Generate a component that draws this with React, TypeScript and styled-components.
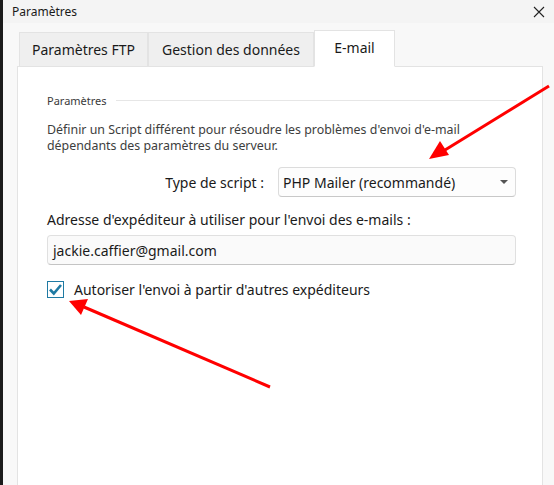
import React from "react";
import styled, { createGlobalStyle } from "styled-components";

const Global = createGlobalStyle`
  html, body { margin: 0; padding: 0; }
  body {
    background: #f3f3f3;
    font-family: "Segoe UI", "Noto Sans", "Open Sans", sans-serif;
    overflow: hidden;
  }
`;

const Window = styled.div`
  position: relative;
  width: 554px;
  height: 485px;
  box-sizing: border-box;
  border-left: 3px solid #1b1b1b;
  background: #f4f4f4;
  display: flex;
  flex-direction: column;
  overflow: hidden;
`;

const TitleBar = styled.div`
  height: 23px;
  display: flex;
  align-items: center;
  justify-content: space-between;
  padding: 0 8px 0 9px;
  font-size: 12px;
  color: #1a1a1a;
`;

const CloseBtn = styled.div`
  width: 14px;
  height: 14px;
  display: flex;
  align-items: center;
  justify-content: center;
`;

const Body = styled.div`
  flex: 1;
  display: flex;
  flex-direction: column;
  padding: 7px 11px 0 14px;
  background: #f8f8f8;
`;

const TabStrip = styled.div`
  display: flex;
  align-items: flex-end;
  height: 37px;
  padding-left: 2px;
  margin-bottom: -1px;
  position: relative;
  z-index: 1;
`;

const Tab = styled.div<{ $active?: boolean; $w: number }>`
  box-sizing: border-box;
  width: ${(p) => p.$w}px;
  height: ${(p) => (p.$active ? 37 : 35)}px;
  display: flex;
  align-items: center;
  justify-content: center;
  font-size: 14px;
  color: #1a1a1a;
  background: ${(p) => (p.$active ? "#ffffff" : "#efefef")};
  border: 1px solid #e3e3e3;
  border-bottom: ${(p) => (p.$active ? "1px solid #ffffff" : "1px solid #e3e3e3")};
  padding-bottom: ${(p) => (p.$active ? 2 : 0)}px;
`;

const Panel = styled.div`
  flex: 1;
  background: #ffffff;
  border: 1px solid #e3e3e3;
  border-bottom: none;
  padding: 25px 25px 0 29px;
  display: flex;
  flex-direction: column;
`;

const GroupHeader = styled.div`
  display: flex;
  align-items: center;
  gap: 9px;
  font-size: 11px;
  color: #3a3a3a;
  height: 16px;
`;

const GroupLine = styled.div`
  flex: 1;
  height: 1px;
  background: #e6e6e6;
`;

const Description = styled.p`
  margin: 14px 0 0 0;
  font-size: 12.4px;
  line-height: 16px;
  color: #3d3d3d;
  width: 430px;
`;

const ScriptRow = styled.div`
  display: flex;
  align-items: center;
  justify-content: flex-end;
  gap: 14px;
  margin-top: 13px;
  width: 469px;
`;

const Label = styled.span`
  font-size: 14px;
  color: #1a1a1a;
`;

const Select = styled.div`
  box-sizing: border-box;
  width: 238px;
  height: 30px;
  border: 1px solid #dcdcdc;
  border-bottom-color: #c8c8c8;
  border-radius: 4px;
  background: #fdfdfd;
  display: flex;
  align-items: center;
  justify-content: space-between;
  padding: 0 7px 0 4px;
  font-size: 14px;
  color: #1a1a1a;
`;

const Caret = styled.div`
  width: 0;
  height: 0;
  border-left: 4px solid transparent;
  border-right: 4px solid transparent;
  border-top: 4px solid #555;
`;

const FieldLabel = styled.div`
  margin-top: 13px;
  font-size: 14px;
  color: #1a1a1a;
  height: 19px;
  line-height: 19px;
`;

const Input = styled.div`
  box-sizing: border-box;
  margin-top: 6px;
  width: 469px;
  height: 30px;
  border: 1px solid #e0e0e0;
  border-bottom-color: #c4c4c4;
  border-radius: 4px;
  background: #fafafa;
  display: flex;
  align-items: center;
  padding-left: 5px;
  font-size: 14px;
  color: #1a1a1a;
`;

const CheckRow = styled.label`
  display: flex;
  align-items: center;
  gap: 10px;
  margin-top: 15px;
  font-size: 14px;
  color: #1a1a1a;
`;

const CheckBox = styled.div`
  box-sizing: border-box;
  width: 17px;
  height: 17px;
  border: 1px solid #1f7aa3;
  background: #fff;
  display: flex;
  align-items: center;
  justify-content: center;
`;

const Overlay = styled.svg`
  position: absolute;
  left: -3px;
  top: 0;
  pointer-events: none;
`;

export default function App() {
  return (
    <>
      <Global />
      <Window>
        <TitleBar>
          <span>Paramètres</span>
          <CloseBtn>
            <svg width="12" height="12" viewBox="0 0 12 12">
              <path d="M1 1 L11 11 M11 1 L1 11" stroke="#222" strokeWidth="1.1" />
            </svg>
          </CloseBtn>
        </TitleBar>
        <Body>
          <TabStrip>
            <Tab $w={129}>Paramètres FTP</Tab>
            <Tab $w={166}>Gestion des données</Tab>
            <Tab $w={81} $active>E-mail</Tab>
          </TabStrip>
          <Panel>
            <GroupHeader>
              <span>Paramètres</span>
              <GroupLine />
            </GroupHeader>
            <Description>
              Définir un Script différent pour résoudre les problèmes d'envoi d'e-mail
              dépendants des paramètres du serveur.
            </Description>
            <ScriptRow>
              <Label>Type de script :</Label>
              <Select>
                <span>PHP Mailer (recommandé)</span>
                <Caret />
              </Select>
            </ScriptRow>
            <FieldLabel>Adresse d'expéditeur à utiliser pour l'envoi des e-mails :</FieldLabel>
            <Input>jackie.caffier@gmail.com</Input>
            <CheckRow>
              <CheckBox>
                <svg width="15" height="15" viewBox="0 0 15 15">
                  <path d="M2 7.5 L5.8 11.5 L13 3" fill="none" stroke="#1f7aa3" strokeWidth="2.6" />
                </svg>
              </CheckBox>
              <span>Autoriser l'envoi à partir d'autres expéditeurs</span>
            </CheckRow>
          </Panel>
        </Body>
        <Overlay width="554" height="485" viewBox="0 0 554 485">
          <line x1="549" y1="86" x2="445" y2="150" stroke="#ff0000" strokeWidth="3" />
          <polygon points="429,159 440,141 449,155" fill="#ff0000" />
          <line x1="270" y1="387" x2="84" y2="307" stroke="#ff0000" strokeWidth="3" />
          <polygon points="69,301 88,299 81,315" fill="#ff0000" />
        </Overlay>
      </Window>
    </>
  );
}
